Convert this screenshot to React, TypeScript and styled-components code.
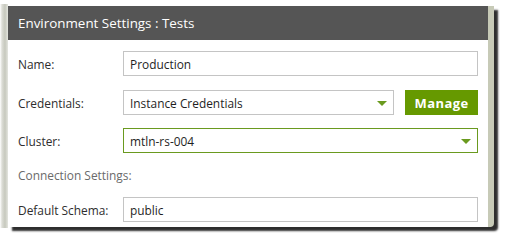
import React from "react";
import styled, { createGlobalStyle } from "styled-components";

const Global = createGlobalStyle`
  html, body { margin: 0; padding: 0; background: #ffffff; }
  body { font-family: "Open Sans", "Noto Sans", sans-serif; }
`;

const Page = styled.div`
  width: 509px;
  height: 243px;
  box-sizing: border-box;
  padding: 6px 0 0 8px;
  background: linear-gradient(90deg, #ffffff 0px, #dcddd6 2px, #c6c8bd 5px, #e4e5df 8px, #ffffff 8px);
  background-repeat: no-repeat;
  background-size: 8px 224px;
  background-position: 0 4px;
`;

const Panel = styled.div`
  width: 480px;
  height: 221px;
  background: #ffffff;
  border-right: 6px solid #c7cab7;
  border-bottom-right-radius: 4px;
  box-shadow: 4px 4px 2px 0px rgba(35, 35, 35, 0.95);
  display: flex;
  flex-direction: column;
`;

const Header = styled.div`
  height: 34px;
  background: #555555;
  color: #ffffff;
  font-size: 13.4px;
  display: flex;
  align-items: center;
  padding-left: 10px;
  padding-bottom: 1px;
  box-sizing: border-box;
`;

const Body = styled.div`
  display: flex;
  flex-direction: column;
  gap: 13px;
  padding: 11px 10px 0 10px;
`;

const Row = styled.div<{ $extra?: number }>`
  display: grid;
  grid-template-columns: 105px 1fr;
  align-items: center;
  height: 25px;
  margin-bottom: ${(p) => p.$extra ?? 0}px;
`;

const Label = styled.div`
  font-size: 11.9px;
  color: #2e2e2e;
`;

const SectionLabel = styled.div`
  font-size: 11.9px;
  color: #6a6a6a;
  height: 18px;
  line-height: 18px;
`;

const Field = styled.div<{ $active?: boolean }>`
  height: 25px;
  box-sizing: border-box;
  border: 1px solid ${(p) => (p.$active ? "#6a9a1f" : "#c4c4c4")};
  background: #ffffff;
  display: flex;
  align-items: center;
  padding: 0 6px;
  font-size: 11.9px;
  color: #1f1f1f;
  position: relative;
`;

const Arrow = styled.span`
  position: absolute;
  right: 6px;
  top: 10px;
  width: 0;
  height: 0;
  border-left: 5px solid transparent;
  border-right: 5px solid transparent;
  border-top: 5px solid #6a9a1f;
`;

const Pair = styled.div`
  display: grid;
  grid-template-columns: 1fr 73px;
  gap: 11px;
`;

const Button = styled.div`
  height: 25px;
  background: #669900;
  color: #ffffff;
  font-weight: 700;
  font-size: 13px;
  display: flex;
  align-items: center;
  justify-content: center;
  letter-spacing: 0.4px;
`;

export default function App() {
  return (
    <>
      <Global />
      <Page>
        <Panel>
          <Header>Environment Settings : Tests</Header>
          <Body>
            <Row $extra={1}>
              <Label>Name:</Label>
              <Field>Production</Field>
            </Row>
            <Row>
              <Label>Credentials:</Label>
              <Pair>
                <Field>
                  Instance Credentials
                  <Arrow />
                </Field>
                <Button>Manage</Button>
              </Pair>
            </Row>
            <Row>
              <Label>Cluster:</Label>
              <Field $active>
                mtln-rs-004
                <Arrow />
              </Field>
            </Row>
            <SectionLabel>Connection Settings:</SectionLabel>
            <Row>
              <Label>Default Schema:</Label>
              <Field>public</Field>
            </Row>
          </Body>
        </Panel>
      </Page>
    </>
  );
}
